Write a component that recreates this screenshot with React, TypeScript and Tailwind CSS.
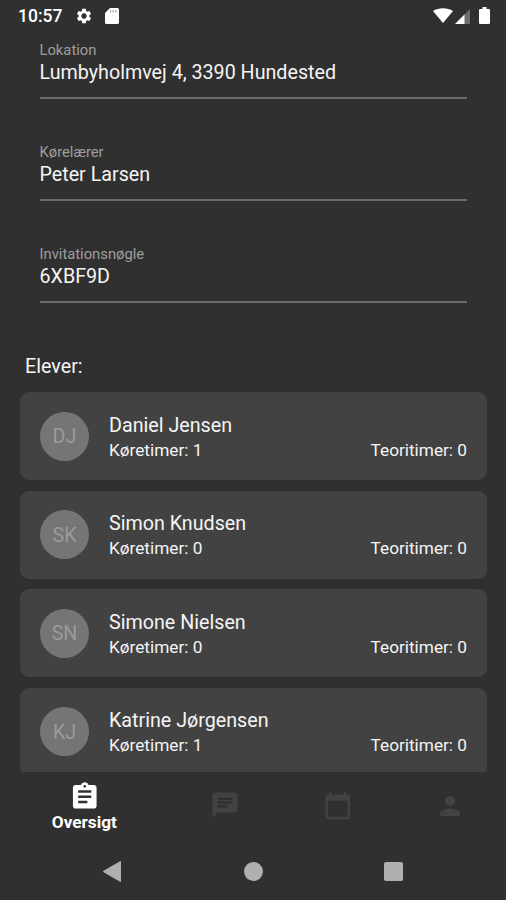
import { MdAssignment, MdCalendarToday, MdChat, MdPerson, MdSettings } from 'react-icons/md';

interface Student {
  name: string;
  initials: string;
  driving: number;
  theory: number;
}

const students: Student[] = [
  { name: 'Daniel Jensen', initials: 'DJ', driving: 1, theory: 0 },
  { name: 'Simon Knudsen', initials: 'SK', driving: 0, theory: 0 },
  { name: 'Simone Nielsen', initials: 'SN', driving: 0, theory: 0 },
  { name: 'Katrine Jørgensen', initials: 'KJ', driving: 1, theory: 0 },
];

const fields = [
  { label: 'Lokation', value: 'Lumbyholmvej 4, 3390 Hundested' },
  { label: 'Kørelærer', value: 'Peter Larsen' },
  { label: 'Invitationsnøgle', value: '6XBF9D' },
];

function StatusBar() {
  return (
    <header className="flex h-8 shrink-0 items-center pl-[18px] pr-4 text-white">
      <span className="w-[57px] text-[17.5px] font-medium leading-8">10:57</span>
      <MdSettings size={18} />
      <svg className="ml-3 h-4 w-[14px]" viewBox="0 0 14 16" fill="currentColor">
        <path d="M5 0h7.5A1.5 1.5 0 0 1 14 1.5v13a1.5 1.5 0 0 1-1.5 1.5h-11A1.5 1.5 0 0 1 0 14.5V5z" />
        <path d="M5 2h1.2v2.5H5zM7.6 2h1.2v2.5H7.6zM10.2 2h1.2v2.5h-1.2z" fill="#303030" opacity=".45" />
      </svg>
      <div className="mb-[2px] ml-auto flex h-[17px] items-end">
        <svg className="mb-px h-[15px] w-[20px]" viewBox="0 0 20 15" fill="currentColor">
          <path d="M0 3C5.5-.8 14.5-.8 20 3L10 15z" />
        </svg>
        <svg className="ml-[2px] h-[15px] w-[15px]" viewBox="0 0 15 15" fill="currentColor">
          <path d="M15 0v15H0z" opacity=".3" />
          <path d="M9.500 5.500V15H0z" />
        </svg>
        <svg className="ml-[9px] h-[17px] w-[11px]" viewBox="0 0 11 17" fill="currentColor">
          <path d="M3.500 0h4v2H10a1 1 0 0 1 1 1v13a1 1 0 0 1-1 1H1a1 1 0 0 1-1-1V3a1 1 0 0 1 1-1h2.500z" />
        </svg>
      </div>
    </header>
  );
}

function Field({ label, value }: { label: string; value: string }) {
  return (
    <div className="mb-[35px] h-[67px] border-b-2 border-[#6b6b6b]">
      <div className="pt-[9px] text-[14.77px] leading-[18px] text-[#9e9e9e]">{label}</div>
      <div className="text-[19.7px] leading-[28px] text-[#f5f5f5]">{value}</div>
    </div>
  );
}

function StudentCard({ student }: { student: Student }) {
  return (
    <div className="flex h-[88px] shrink-0 items-center rounded-[9px] bg-[#424242] px-5">
      <div className="flex size-[49px] items-center justify-center rounded-full bg-[#757575] pt-[2px] text-[19.7px] text-[#9b9b9b]">
        {student.initials}
      </div>
      <div className="ml-5 flex-1 pt-[3px] text-[#f5f5f5]">
        <div className="text-[19.7px] leading-[26px]">{student.name}</div>
        <div className="-mt-px mb-px flex justify-between text-[17.23px] leading-[24px]">
          <span>Køretimer: {student.driving}</span>
          <span>Teoritimer: {student.theory}</span>
        </div>
      </div>
    </div>
  );
}

function BottomNav() {
  return (
    <nav className="flex h-[70px] shrink-0 text-[#424242]">
      <button type="button" className="flex flex-[1.5] flex-col items-center pt-[9px] text-white">
        <MdAssignment size={31.500} />
        <span className="-mt-px text-[17.2px] font-bold leading-[20px]">Oversigt</span>
      </button>
      <button type="button" aria-label="Beskeder" className="flex flex-1 justify-center pt-[18px]">
        <MdChat size={30} />
      </button>
      <button type="button" aria-label="Kalender" className="flex flex-1 justify-center pt-[19px]">
        <MdCalendarToday size={29.5} />
      </button>
      <button type="button" aria-label="Profil" className="flex flex-1 justify-center pt-[19px]">
        <MdPerson size={30} />
      </button>
    </nav>
  );
}

function SystemNav() {
  return (
    <footer className="flex h-[58px] shrink-0 items-center justify-between pl-[103px] pr-[103px] text-[#b0b0b0]">
      <svg className="h-[21px] w-[19px]" viewBox="0 0 19 21" fill="currentColor">
        <path d="M18 .5v20a.6.6 0 0 1-1 .3L.6 11.200a.8.8 0 0 1 0-1.400L17 .2a.6.6 0 0 1 1 .3z" />
      </svg>
      <span className="size-[19px] rounded-full bg-[#b0b0b0]" />
      <span className="size-[19px] rounded-[2px] bg-[#b0b0b0]" />
    </footer>
  );
}

export default function App() {
  return (
    <div className="flex h-[900px] w-[506px] flex-col overflow-hidden bg-[#303030] font-[Roboto,sans-serif]">
      <StatusBar />
      <main className="flex min-h-0 flex-1 flex-col overflow-hidden">
        <section className="shrink-0 px-[39.5px]">
          {fields.map((field) => (
            <Field key={field.label} {...field} />
          ))}
        </section>
        <h2 className="shrink-0 pl-[25px] pt-[16px] text-[19.7px] leading-[26px] text-[#f5f5f5]">Elever:</h2>
        <div className="mt-3 flex flex-col gap-[10.500px] pl-5 pr-[19px]">
          {students.map((student) => (
            <StudentCard key={student.name} student={student} />
          ))}
        </div>
      </main>
      <BottomNav />
      <SystemNav />
    </div>
  );
}
